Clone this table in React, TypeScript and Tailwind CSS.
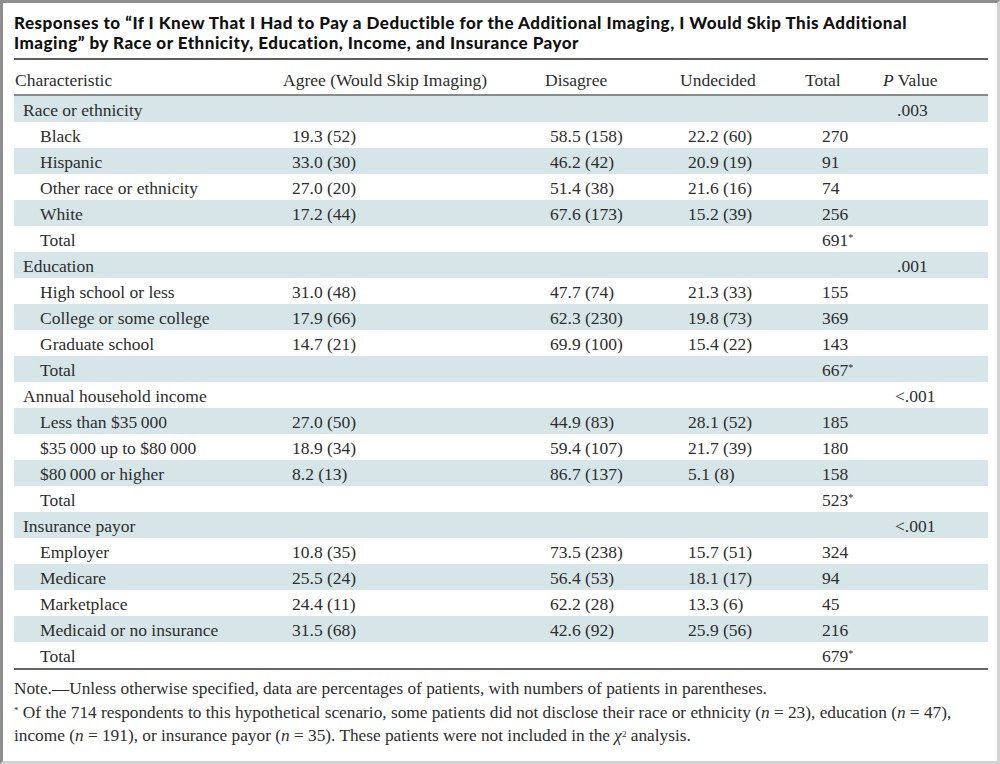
import React from "react";

type Row =
  | { kind: "group"; label: string; p: string; pPad: string }
  | { kind: "item"; label: string; a: string; d: string; u: string; t: string }
  | { kind: "total"; t: string };

const rows: Row[] = [
  { kind: "group", label: "Race or ethnicity", p: ".003", pPad: "pl-[14px]" },
  { kind: "item", label: "Black", a: "19.3 (52)", d: "58.5 (158)", u: "22.2 (60)", t: "270" },
  { kind: "item", label: "Hispanic", a: "33.0 (30)", d: "46.2 (42)", u: "20.9 (19)", t: "91" },
  { kind: "item", label: "Other race or ethnicity", a: "27.0 (20)", d: "51.4 (38)", u: "21.6 (16)", t: "74" },
  { kind: "item", label: "White", a: "17.2 (44)", d: "67.6 (173)", u: "15.2 (39)", t: "256" },
  { kind: "total", t: "691" },
  { kind: "group", label: "Education", p: ".001", pPad: "pl-[14px]" },
  { kind: "item", label: "High school or less", a: "31.0 (48)", d: "47.7 (74)", u: "21.3 (33)", t: "155" },
  { kind: "item", label: "College or some college", a: "17.9 (66)", d: "62.3 (230)", u: "19.8 (73)", t: "369" },
  { kind: "item", label: "Graduate school", a: "14.7 (21)", d: "69.9 (100)", u: "15.4 (22)", t: "143" },
  { kind: "total", t: "667" },
  { kind: "group", label: "Annual household income", p: "<.001", pPad: "pl-[12px]" },
  { kind: "item", label: "Less than $35\u2009000", a: "27.0 (50)", d: "44.9 (83)", u: "28.1 (52)", t: "185" },
  { kind: "item", label: "$35\u2009000 up to $80\u2009000", a: "18.9 (34)", d: "59.4 (107)", u: "21.7 (39)", t: "180" },
  { kind: "item", label: "$80\u2009000 or higher", a: "8.2 (13)", d: "86.7 (137)", u: "5.1 (8)", t: "158" },
  { kind: "total", t: "523" },
  { kind: "group", label: "Insurance payor", p: "<.001", pPad: "pl-[12px]" },
  { kind: "item", label: "Employer", a: "10.8 (35)", d: "73.5 (238)", u: "15.7 (51)", t: "324" },
  { kind: "item", label: "Medicare", a: "25.5 (24)", d: "56.4 (53)", u: "18.1 (17)", t: "94" },
  { kind: "item", label: "Marketplace", a: "24.4 (11)", d: "62.2 (28)", u: "13.3 (6)", t: "45" },
  { kind: "item", label: "Medicaid or no insurance", a: "31.5 (68)", d: "42.6 (92)", u: "25.9 (56)", t: "216" },
  { kind: "total", t: "679" },
];

const grid = "grid grid-cols-[269px_262px_135px_125px_78px_105px]";

function TableRow({ row, i }: { row: Row; i: number }) {
  const bg = i % 2 === 0 ? "bg-[#d6e5e7]" : "bg-white";
  const base = `${grid} ${bg} h-[26px] leading-[26px] pt-[1px] whitespace-nowrap`;
  if (row.kind === "group") {
    return (
      <div className={base}>
        <div className="pl-[9px]">{row.label}</div>
        <div />
        <div />
        <div />
        <div />
        <div className={row.pPad}>{row.p}</div>
      </div>
    );
  }
  if (row.kind === "total") {
    return (
      <div className={base}>
        <div className="pl-[26px]">Total</div>
        <div />
        <div />
        <div />
        <div className="pl-[17px]">
          {row.t}
          <sup className="text-[10px]">*</sup>
        </div>
        <div />
      </div>
    );
  }
  return (
    <div className={base}>
      <div className="pl-[26px]">{row.label}</div>
      <div className="pl-[9px]">{row.a}</div>
      <div className="pl-[5px]">{row.d}</div>
      <div className="pl-[8px]">{row.u}</div>
      <div className="pl-[17px]">{row.t}</div>
      <div />
    </div>
  );
}

export default function App() {
  return (
    <div className="w-[1000px] h-[764px] bg-white border-[3px] border-t-[#8e8e8e] border-l-[#8e8e8e] border-r-[#d2d2d2] border-b-[#d2d2d2] pl-[11px] pr-[9px] overflow-hidden">
      <div className="pt-[10px] font-['Lato',sans-serif] font-black text-[17px] leading-[20px] tracking-[0.5px] text-[#111] whitespace-nowrap">
        Responses to “If I Knew That I Had to Pay a Deductible for the Additional Imaging, I Would Skip This Additional
        <br />
        Imaging” by Race or Ethnicity, Education, Income, and Insurance Payor
      </div>
      <div className="mt-[5px] h-[2px] bg-[#5e5e5e]" />
      <div className="font-['Liberation_Serif',serif] text-[17.5px] text-[#2e2e2e]">
        <div className={`${grid} h-[34px] leading-[26px] pt-[7px] whitespace-nowrap`}>
          <div className="pl-[1px]">Characteristic</div>
          <div>Agree (Would Skip Imaging)</div>
          <div>Disagree</div>
          <div>Undecided</div>
          <div>Total</div>
          <div>
            <span className="italic">P</span> Value
          </div>
        </div>
        <div className="h-[2px] bg-[#8a8a8a]" />
        {rows.map((r, i) => (
          <TableRow key={i} row={r} i={i} />
        ))}
        <div className="h-[2px] bg-[#666]" />
      </div>
      <div className="mt-[7px] font-['Liberation_Serif',serif] text-[17.3px] leading-[23.5px] text-[#2e2e2e] whitespace-nowrap">
        <div>Note.—Unless otherwise specified, data are percentages of patients, with numbers of patients in parentheses.</div>
        <div>
          <sup className="text-[9px]">*</sup> Of the 714 respondents to this hypothetical scenario, some patients did not disclose their race or ethnicity (
          <span className="italic">n</span> = 23), education (<span className="italic">n</span> = 47),
        </div>
        <div>
          income (<span className="italic">n</span> = 191), or insurance payor (<span className="italic">n</span> = 35). These patients were not included in the{" "}
          <span className="italic">χ</span>
          <sup className="text-[9px]">2</sup> analysis.
        </div>
      </div>
    </div>
  );
}
